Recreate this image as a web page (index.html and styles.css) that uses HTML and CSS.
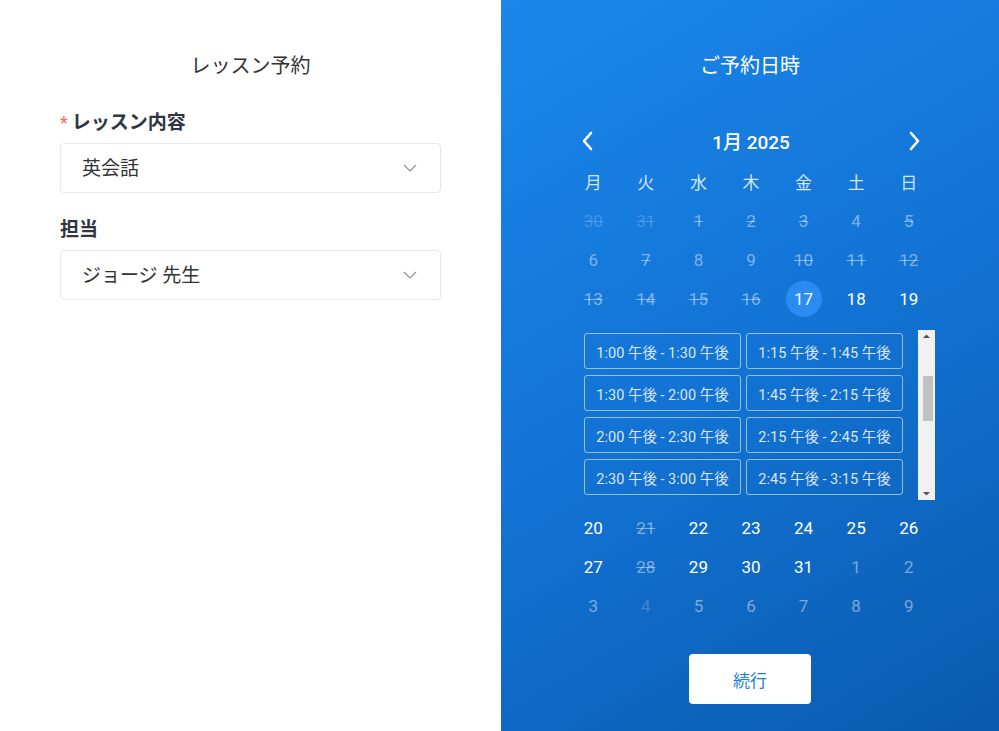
FILE: index.html
```html
<!DOCTYPE html>
<html>
<head>
    <meta charset="utf-8">
    <title>レッスン予約</title>
    <link rel="stylesheet" href="styles.css">
</head>
<body>
<div class="page">
    <div class="form-panel">
        <h2 class="panel-title">レッスン予約</h2>
        <div class="field">
            <label class="field-label"><span class="required">*</span>レッスン内容</label>
            <div class="select">
                <span>英会話</span>
                <svg class="select-arrow" width="14" height="8" viewBox="0 0 14 8"><polyline points="1,1 7,7 13,1" fill="none" stroke="#8a8f98" stroke-width="1.1"/></svg>
            </div>
        </div>
        <div class="field">
            <label class="field-label">担当</label>
            <div class="select">
                <span>ジョージ 先生</span>
                <svg class="select-arrow" width="14" height="8" viewBox="0 0 14 8"><polyline points="1,1 7,7 13,1" fill="none" stroke="#8a8f98" stroke-width="1.1"/></svg>
            </div>
        </div>
    </div>

    <div class="date-panel">
        <h2 class="panel-title light">ご予約日時</h2>
        <div class="calendar">
            <div class="month-nav">
                <button class="nav-btn"><svg width="12" height="20" viewBox="0 0 12 20"><polyline points="10,2 3,10 10,18" fill="none" stroke="#fff" stroke-width="2.6" stroke-linecap="round" stroke-linejoin="round"/></svg></button>
                <div class="month-label">1月 2025</div>
                <button class="nav-btn"><svg width="12" height="20" viewBox="0 0 12 20"><polyline points="2,2 9,10 2,18" fill="none" stroke="#fff" stroke-width="2.6" stroke-linecap="round" stroke-linejoin="round"/></svg></button>
            </div>
            <div class="week-row weekdays">
                <span>月</span><span>火</span><span>水</span><span>木</span><span>金</span><span>土</span><span>日</span>
            </div>
            <div class="week-row">
                <span class="day other off">30</span><span class="day other off">31</span><span class="day muted off">1</span><span class="day muted off">2</span><span class="day muted off">3</span><span class="day muted">4</span><span class="day muted off">5</span>
            </div>
            <div class="week-row">
                <span class="day muted">6</span><span class="day muted off">7</span><span class="day muted">8</span><span class="day muted">9</span><span class="day muted off">10</span><span class="day muted off">11</span><span class="day muted off">12</span>
            </div>
            <div class="week-row">
                <span class="day muted off">13</span><span class="day muted off">14</span><span class="day muted off">15</span><span class="day muted off">16</span><span class="day"><span class="selected">17</span></span><span class="day">18</span><span class="day">19</span>
            </div>

            <div class="slots">
                <div class="slot-list" id="slots">
                    <div class="slot-grid">
                        <button class="slot">11:30 午前 - 12:00 午後</button>
                        <button class="slot">11:45 午前 - 12:15 午後</button>
                        <button class="slot">12:00 午後 - 12:30 午後</button>
                        <button class="slot">12:15 午後 - 12:45 午後</button>
                        <button class="slot">12:30 午後 - 1:00 午後</button>
                        <button class="slot">12:45 午後 - 1:15 午後</button>
                        <button class="slot">1:00 午後 - 1:30 午後</button>
                        <button class="slot">1:15 午後 - 1:45 午後</button>
                        <button class="slot">1:30 午後 - 2:00 午後</button>
                        <button class="slot">1:45 午後 - 2:15 午後</button>
                        <button class="slot">2:00 午後 - 2:30 午後</button>
                        <button class="slot">2:15 午後 - 2:45 午後</button>
                        <button class="slot">2:30 午後 - 3:00 午後</button>
                        <button class="slot">2:45 午後 - 3:15 午後</button>
                        <button class="slot">3:00 午後 - 3:30 午後</button>
                        <button class="slot">3:15 午後 - 3:45 午後</button>
                        <button class="slot">3:30 午後 - 4:00 午後</button>
                        <button class="slot">3:45 午後 - 4:15 午後</button>
                        <button class="slot">4:00 午後 - 4:30 午後</button>
                        <button class="slot">4:15 午後 - 4:45 午後</button>
                        <button class="slot">4:30 午後 - 5:00 午後</button>
                        <button class="slot">4:45 午後 - 5:15 午後</button>
                        <button class="slot">5:00 午後 - 5:30 午後</button>
                        <button class="slot">5:15 午後 - 5:45 午後</button>
                        <button class="slot">5:30 午後 - 6:00 午後</button>
                        <button class="slot">5:45 午後 - 6:15 午後</button>
                    </div>
                </div>
                <div class="scrollbar">
                    <svg class="scroll-arrow" width="17" height="12" viewBox="0 0 17 12"><polygon points="5,8 8.5,4.5 12,8" fill="#505050"/></svg>
                    <div class="scroll-track"><div class="scroll-thumb"></div></div>
                    <svg class="scroll-arrow" width="17" height="12" viewBox="0 0 17 12"><polygon points="5,4 8.5,7.5 12,4" fill="#505050"/></svg>
                </div>
            </div>

            <div class="week-row">
                <span class="day">20</span><span class="day muted off">21</span><span class="day">22</span><span class="day">23</span><span class="day">24</span><span class="day">25</span><span class="day">26</span>
            </div>
            <div class="week-row">
                <span class="day">27</span><span class="day muted off">28</span><span class="day">29</span><span class="day">30</span><span class="day">31</span><span class="day muted">1</span><span class="day muted">2</span>
            </div>
            <div class="week-row">
                <span class="day muted">3</span><span class="day other">4</span><span class="day muted">5</span><span class="day muted">6</span><span class="day muted">7</span><span class="day muted">8</span><span class="day muted">9</span>
            </div>
        </div>
        <button class="continue-btn">続行</button>
    </div>
</div>
<script>
    // 選択中の時間帯が見えるようにスクロール
    document.getElementById('slots').scrollTop = 127;
</script>
</body>
</html>
```

FILE: styles.css
```css
html, body {
    margin: 0;
    height: 100%;
}

body {
    font-family: Roboto, "Noto Sans CJK JP", sans-serif;
    background-color: #fff;
}

.page {
    display: flex;
    height: 731px;
}

.form-panel {
    width: 501px;
    box-sizing: border-box;
    padding: 52px 60px 0 60px;
}

.panel-title {
    margin: 0;
    font-size: 20px;
    line-height: 28px;
    font-weight: 400;
    text-align: center;
    color: #333;
}

.panel-title.light {
    color: #fff;
}

.field {
    margin-top: 30px;
}

.field + .field {
    margin-top: 24px;
}

.field-label {
    display: block;
    font-size: 19px;
    line-height: 26px;
    font-weight: 700;
    color: #2f3542;
    margin-bottom: 7px;
}

.required {
    color: #f56c6c;
    font-size: 18px;
    margin-right: 4px;
    font-weight: 400;
}

.select {
    display: flex;
    align-items: center;
    justify-content: space-between;
    height: 50px;
    box-sizing: border-box;
    padding: 0 23px 3px 21px;
    border: 1px solid #e4e7ed;
    border-radius: 4px;
    font-size: 19px;
    color: #333;
}

.select-arrow {
    margin-top: 3px;
}

.date-panel {
    flex: 1;
    display: flex;
    flex-direction: column;
    align-items: center;
    padding-top: 52px;
    background: linear-gradient(150deg, #1b87eb 0%, #1273d4 50%, #0a5aae 100%);
}

.calendar {
    width: 368px;
    margin: 41px 0 0 2px;
}

.month-nav {
    display: flex;
    align-items: center;
    justify-content: space-between;
    height: 40px;
    padding: 0 14px;
}

.nav-btn {
    background: transparent;
    border: none;
    padding: 0;
    width: 12px;
    height: 20px;
    display: flex;
    cursor: pointer;
}

.month-label {
    color: #fff;
    font-size: 19px;
    font-weight: 500;
    margin-bottom: 2px;
}

.week-row {
    display: grid;
    grid-template-columns: repeat(7, 1fr);
    height: 39px;
    align-items: center;
    text-align: center;
    font-size: 17px;
    color: #fff;
}

.weekdays {
    color: rgba(255, 255, 255, 0.82);
    margin-top: 1px;
}

.day {
    display: flex;
    justify-content: center;
    align-items: center;
    height: 39px;
}

.day.muted {
    color: rgba(255, 255, 255, 0.45);
}

.day.other {
    color: rgba(255, 255, 255, 0.2);
}

.day.off {
    text-decoration: line-through;
}

.selected {
    display: flex;
    align-items: center;
    justify-content: center;
    width: 36px;
    height: 36px;
    border-radius: 50%;
    background-color: #2a8cf0;
}

.slots {
    display: flex;
    height: 170px;
    margin: 12px 0 8px 0;
}

.slot-list {
    flex: 1;
    overflow: hidden;
}

.slot-grid {
    display: grid;
    grid-template-columns: 157px 157px;
    gap: 6px 5px;
    justify-content: center;
    padding: 4px 0 4px 2px;
}

.slot {
    height: 36px;
    padding: 0;
    background: transparent;
    border: 1px solid rgba(255, 255, 255, 0.55);
    border-radius: 3px;
    color: rgba(255, 255, 255, 0.85);
    font-family: Roboto, "Noto Sans CJK JP", sans-serif;
    font-size: 14.5px;
    white-space: nowrap;
    cursor: pointer;
}

.scrollbar {
    width: 17px;
    display: flex;
    flex-direction: column;
    background-color: #f1f1f1;
}

.scroll-arrow {
    display: block;
    flex: none;
}

.scroll-track {
    flex: 1;
    padding: 34px 2px 0 5px;
}

.scroll-thumb {
    height: 45px;
    background-color: #c1c1c1;
}

.continue-btn {
    margin-top: 29px;
    width: 122px;
    height: 50px;
    background-color: #fff;
    border: none;
    border-radius: 4px;
    color: #1a7fd8;
    font-family: Roboto, "Noto Sans CJK JP", sans-serif;
    font-size: 17px;
    cursor: pointer;
}
```
